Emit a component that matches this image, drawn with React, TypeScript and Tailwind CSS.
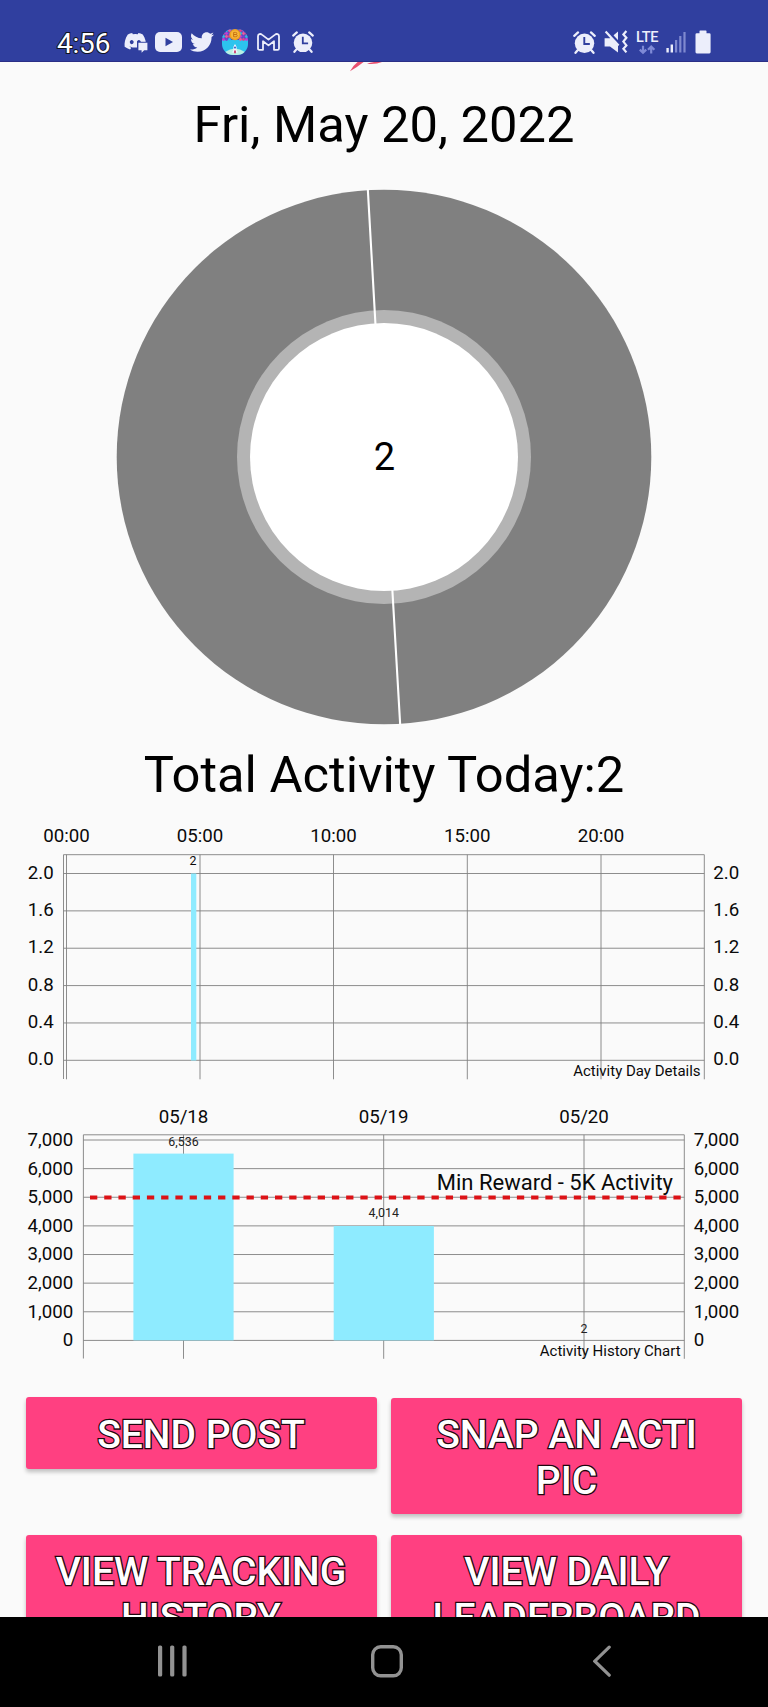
import type { ReactNode } from "react";
import { FaDiscord, FaTwitter } from "react-icons/fa";

function Alarm({ className }: { className: string }) {
  return (
    <svg viewBox="0 0 22 22" className={className} fill="none" stroke="#eceefb" strokeLinecap="round">
      <circle cx="11" cy="11.8" r="9.3" fill="#eceefb" stroke="none" />
      <path d="M1.2 4.6 4.8 1.4M20.8 4.6 17.2 1.4M4.2 18.6 2.4 20.8M17.8 18.6 19.6 20.8" strokeWidth="2.2" />
      <path d="M10.8 6.6V12.4H15.2" stroke="#303f9f" strokeWidth="1.8" strokeLinecap="square" />
    </svg>
  );
}

function GameIcon() {
  const dots = ["#7d3fd0", "#e0408f", "#37b6e8", "#c43bd8", "#f05a9a"];
  return (
    <svg viewBox="0 0 26 26" className="ml-[8px] h-[26px] w-[26px]">
      <defs>
        <clipPath id="game-clip">
          <rect width="26" height="26" rx="11" />
        </clipPath>
      </defs>
      <g clipPath="url(#game-clip)">
        <rect width="26" height="26" fill="#2cc4ee" />
        <rect width="26" height="11" fill="#4a55b8" />
        {[1.5, 4.5, 7.5, 10.5].map((y, r) =>
          [1.5, 4.5, 7.5, 18.5, 21.5, 24.5].map((x, c) => (
            <circle key={`${r}-${c}`} cx={x} cy={y} r="1.4" fill={dots[(r + c * 2) % 5]} />
          )),
        )}
        <path d="M3 23Q13 16 23 23V26H3Z" fill="#b9f0e4" />
        <path d="M13 15C14.6 17 14.8 18.6 14.6 21L16 23.6H10L11.4 21C11.2 18.6 11.4 17 13 15Z" fill="#f1f4fb" />
        <circle cx="13" cy="18.6" r="1.1" fill="#4468c8" />
        <path d="M12 21.4h2v2.8h-2z" fill="#d0507d" />
      </g>
      <circle cx="13" cy="5.6" r="5.6" fill="#f0a020" />
      <circle cx="13" cy="5.6" r="4" fill="#f8b83c" />
      <path d="M11.6 3.4h2.2a1 1 0 0 1 0 2.1h-2.2h2.5a1.1 1.1 0 0 1 0 2.3h-2.5z" fill="none" stroke="#c46f12" strokeWidth="0.9" />
    </svg>
  );
}

function StatusBar() {
  return (
    <header className="flex h-[62px] shrink-0 items-start border-b border-[#2b2f86] bg-[#303f9f]">
      <div className="ml-[57px] mt-[28px] w-[54px] text-[28px] leading-[32px] tracking-[-0.2px] text-white [-webkit-text-stroke:2px_#10131f] [paint-order:stroke]">
        4:56
      </div>
      <div className="ml-[13px] mt-[29px] flex h-[26px] items-center">
        <svg viewBox="0 0 24 22" className="h-[22px] w-[24px]">
          <FaDiscord x="-0.4" y="-1.4" size="23.4" color="#eceefb" />
          <path d="M13 10.8H24V22H13z" fill="#303f9f" />
          <path d="M14.4 11.8h9v7.4h-3.2l-2.6 2.6v-2.6h-3.2z" fill="#eceefb" />
        </svg>
        <svg viewBox="0 0 27 20" className="ml-[7px] h-[20px] w-[27px]">
          <rect width="27" height="20" rx="5" fill="#eceefb" />
          <path d="M10.5 5.8 18 10 10.5 14.2Z" fill="#303f9f" />
        </svg>
        <FaTwitter className="ml-[8px] h-[24px] w-[24px]" color="#eceefb" />
        <GameIcon />
        <svg viewBox="0 0 23 18" className="ml-[9px] h-[18px] w-[23px]" fill="none" stroke="#eceefb" strokeWidth="1.8" strokeLinejoin="round">
          <path d="M1 3.2C1 1 3.4 .4 4.9 1.6L11.5 6.6 18.1 1.6C19.6 .4 22 1 22 3.2V15.4Q22 16.8 20.6 16.8H17V8.2L11.5 12.4 6 8.2V16.8H2.4Q1 16.8 1 15.4Z" />
        </svg>
        <Alarm className="ml-[12px] h-[22px] w-[22px]" />
      </div>
      <div className="ml-auto mr-[57px] mt-[29px] flex h-[26px] items-center">
        <Alarm className="h-[23px] w-[23px]" />
        <svg viewBox="0 0 24 24" className="ml-[8px] h-[24px] w-[24px]">
          <path d="M.6 8.2H6L14 1.4V22.6L6 16.4H.6Z" fill="#eceefb" />
          <path d="M1.6 -.6 16 15" stroke="#303f9f" strokeWidth="3.6" />
          <path d="M1.6 1.4 14.6 15.4" stroke="#eceefb" strokeWidth="2.2" />
          <path d="M22.4 1 19.4 4.4 22.4 7.8 19.4 11.6 22.4 15.4 19.4 18.8 22.4 22.4" fill="none" stroke="#eceefb" strokeWidth="2.2" />
        </svg>
        <svg viewBox="0 0 24 26" className="ml-[8px] mr-px h-[26px] w-[24px]">
          <text x="0" y="12.6" fontSize="14.5" fontWeight="500" fill="#eceefb" textLength="22.4">LTE</text>
          <path d="M7 16.8V23.4M3.8 20.6 7 23.8 10.2 20.6M15.2 24.4V17.8M12 20.8 15.2 17.6 18.4 20.8" fill="none" stroke="#7f8ad6" strokeWidth="2.2" />
        </svg>
        <svg viewBox="0 0 20 22" className="ml-[5px] h-[22px] w-[20px]">
          <path d="M.4 17h2.4v4.6H.4zM4.6 13.4H7v8.2H4.6z" fill="#eceefb" />
          <path d="M9 9h2.2v12.6H9zM13.2 5h2.2v16.6h-2.2zM17.4 1h2.2v20.6h-2.2z" fill="#7f89cf" />
        </svg>
        <svg viewBox="0 0 16 24" className="ml-[9px] h-[24px] w-[16px]">
          <path d="M4.5 1Q4.5 .4 5.2.4H10.8Q11.5.4 11.5 1V3.2H14.3Q15.6 3.2 15.6 4.5V22Q15.6 23.4 14.3 23.4H1.8Q.5 23.4 .5 22V4.5Q.5 3.2 1.8 3.2H4.5Z" fill="#eceefb" />
        </svg>
      </div>
    </header>
  );
}

function Donut() {
  return (
    <svg viewBox="0 0 536 536" className="mx-auto block h-[536px] w-[536px] shrink-0">
      <circle cx="268" cy="268" r="267.3" fill="#808080" />
      <circle cx="268" cy="268" r="147" fill="#b4b4b4" />
      <path d="M251.8 0 259.5 136M276.3 400 284.2 536" stroke="#ffffff" strokeWidth="2.1" />
      <circle cx="268" cy="268" r="134" fill="#ffffff" />
      <text x="268.4" y="280.8" fontSize="38" textAnchor="middle">2</text>
    </svg>
  );
}

function DayChart() {
  const times = [
    { x: 66.5, label: "00:00" },
    { x: 200, label: "05:00" },
    { x: 333.5, label: "10:00" },
    { x: 467.3, label: "15:00" },
    { x: 601, label: "20:00" },
  ];
  const levels = ["2.0", "1.6", "1.2", "0.8", "0.4", "0.0"];
  return (
    <svg viewBox="0 820 768 280" className="block h-[280px] w-[768px] shrink-0" fill="#0a0a0a">
      <g stroke="#808080" strokeWidth="0.9">
        {times.map((t) => (
          <path key={t.label} d={`M${t.x} 854.7V1079.3`} />
        ))}
        {levels.map((l, i) => (
          <path key={l} d={`M63.5 ${873.5 + i * 37.36}H704.3`} />
        ))}
        <path d="M63.5 1079V854.7H704.3V1079.3" fill="none" />
      </g>
      <rect x="191" y="873.5" width="5.3" height="187" fill="#8eebff" />
      <g fontSize="18.7">
        {times.map((t) => (
          <text key={t.label} x={t.x} y="842.4" textAnchor="middle">{t.label}</text>
        ))}
        {levels.map((l, i) => (
          <g key={l}>
            <text x="53.8" y={878.6 + i * 37.36} textAnchor="end">{l}</text>
            <text x="713.3" y={878.6 + i * 37.36}>{l}</text>
          </g>
        ))}
      </g>
      <text x="193" y="865.4" fontSize="12.4" textAnchor="middle">2</text>
      <text x="700.6" y="1075.8" fontSize="15" textAnchor="end">Activity Day Details</text>
    </svg>
  );
}

function HistoryChart() {
  const days = [
    { x: 183.5, label: "05/18" },
    { x: 383.7, label: "05/19" },
    { x: 584, label: "05/20" },
  ];
  const levels = ["7,000", "6,000", "5,000", "4,000", "3,000", "2,000", "1,000", "0"];
  return (
    <svg viewBox="0 1100 768 270" className="block h-[270px] w-[768px] shrink-0" fill="#0a0a0a">
      <g stroke="#808080" strokeWidth="0.9">
        {days.map((d) => (
          <path key={d.label} d={`M${d.x} 1134.8V1358.8`} />
        ))}
        {levels.map((l, i) => (
          <path key={l} d={`M83.4 ${1140 + i * 28.63}H684.3`} />
        ))}
        <path d="M83.4 1358.5V1134.8H684.3V1358.8" fill="none" />
      </g>
      <rect x="133.4" y="1153.6" width="100.2" height="186.8" fill="#8eebff" />
      <rect x="333.7" y="1226" width="100.2" height="114.4" fill="#8eebff" />
      <path d="M90 1197.5H681.5" stroke="#dc1216" strokeWidth="3.8" strokeDasharray="7.3 6.93" />
      <g fontSize="18.7">
        {days.map((d) => (
          <text key={d.label} x={d.x} y="1122.8" textAnchor="middle">{d.label}</text>
        ))}
        {levels.map((l, i) => (
          <g key={l}>
            <text x="73.3" y={1145.9 + i * 28.6} textAnchor="end">{l}</text>
            <text x="693.7" y={1145.9 + i * 28.6}>{l}</text>
          </g>
        ))}
      </g>
      <g fontSize="12.4" textAnchor="middle" fill="#222222">
        <text x="183.5" y="1145.7">6,536</text>
        <text x="383.7" y="1217.2">4,014</text>
        <text x="584" y="1332.8">2</text>
      </g>
      <text x="673" y="1190" fontSize="22" textAnchor="end">Min Reward - 5K Activity</text>
      <text x="680.6" y="1355.8" fontSize="15" textAnchor="end">Activity History Chart</text>
    </svg>
  );
}

function ActionButton({ children, className }: { children: ReactNode; className: string }) {
  return (
    <button
      type="button"
      className={`${className} w-[351px] rounded-[3px] bg-[#ff4081] pt-[6px] text-center text-[39px] font-medium leading-[45.7px] text-white shadow-[0_3px_4px_rgba(0,0,0,0.24)] [-webkit-text-stroke:2.6px_#20060f] [paint-order:stroke]`}
    >
      {children}
    </button>
  );
}

function NavBar() {
  return (
    <nav className="flex h-[90px] shrink-0 items-start bg-black pt-[28px]">
      <svg viewBox="0 0 30 32" className="ml-[158px] h-[32px] w-[30px]" fill="#929292">
        <rect x="0" y="0.5" width="4.2" height="31" rx="1.6" />
        <rect x="12.1" y="0.5" width="4.2" height="31" rx="1.6" />
        <rect x="24.4" y="0.5" width="4.2" height="31" rx="1.6" />
      </svg>
      <svg viewBox="0 0 33 33" className="ml-[182px] h-[33px] w-[33px]" fill="none" stroke="#929292" strokeWidth="3.4">
        <rect x="2.7" y="1.8" width="28.6" height="29" rx="8" />
      </svg>
      <svg viewBox="0 0 20 34" className="ml-[190px] h-[34px] w-[20px]" fill="none" stroke="#929292" strokeWidth="3.2" strokeLinecap="round">
        <path d="M16.2 2.2 1.8 16.2 16.2 30.2" />
      </svg>
    </nav>
  );
}

export default function App() {
  return (
    <div className="flex h-[1707px] w-[768px] flex-col overflow-hidden bg-[#fafafa] font-['Roboto',sans-serif] text-black">
      <StatusBar />
      <main className="flex min-h-0 flex-1 flex-col overflow-hidden">
        <svg viewBox="0 0 40 12" className="ml-[348px] block h-[12px] w-[40px] shrink-0">
          <path d="M2 9.2Q5 3.6 9.6 0H15.6Q9 5.4 2 9.2Z" fill="#e8506f" />
          <path d="M19 1.8Q22 .4 26 0H34Q28 2.6 19 1.8Z" fill="#e8506f" />
        </svg>
        <h1 className="mt-[21px] h-[60px] shrink-0 whitespace-nowrap text-center text-[50.7px] leading-[60px]">
          Fri, May 20, 2022
        </h1>
        <div className="mt-[34px] flex h-[536px] shrink-0">
          <Donut />
        </div>
        <h2 className="mt-[20px] h-[60px] shrink-0 whitespace-nowrap text-center text-[50.7px] leading-[60px]">
          Total Activity Today:2
        </h2>
        <div className="mt-[15px]">
          <DayChart />
          <HistoryChart />
        </div>
        <div className="mt-[27px] grid grid-cols-[351px_351px] items-start gap-x-[14.5px] pl-[25.5px]">
          <ActionButton className="h-[72px]">SEND POST</ActionButton>
          <ActionButton className="mt-px h-[116px]">
            SNAP AN ACTI
            <br />
            PIC
          </ActionButton>
          <ActionButton className="mt-[21px] h-[116px]">
            VIEW TRACKING
            <br />
            HISTORY
          </ActionButton>
          <ActionButton className="mt-[21px] h-[116px]">
            VIEW DAILY
            <br />
            LEADERBOARD
          </ActionButton>
        </div>
      </main>
      <NavBar />
    </div>
  );
}
